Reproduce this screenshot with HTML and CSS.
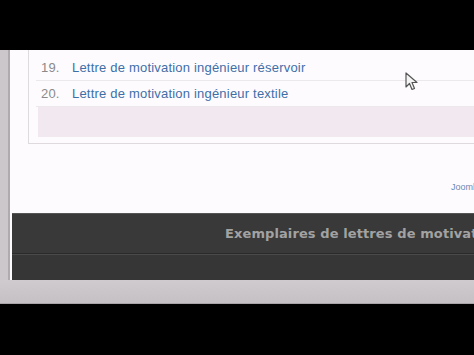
FILE: index.html
```html
<!DOCTYPE html>
<html lang="fr">
	<head>
		<meta charset="UTF-8" />
		<meta name="viewport" content="width=device-width, initial-scale=1.0" />
		<title>Lettres de motivation</title>
		<link rel="stylesheet" href="styles.css">
	</head>
	<body>
		<div class="screen">
			<div class="window">
				<div class="sidebar"></div>
				<div class="page">
					<div class="list-box">
						<ol class="letters" start="19">
							<li><span class="num">19.</span><a href="#">Lettre de motivation ingénieur réservoir</a></li>
							<li><span class="num">20.</span><a href="#">Lettre de motivation ingénieur textile</a></li>
						</ol>
						<div class="pager"></div>
					</div>
					<div class="credit"><a href="#">Joomla</a></div>
					<div class="footer">
						<div class="footer-title">Exemplaires de lettres de motivation</div>
						<div class="footer-bottom"></div>
					</div>
					<svg class="cursor" width="14" height="20" viewBox="0 0 14 20">
						<path d="M1 1 L1 15 L4.5 11.5 L7 17.5 L9.5 16.5 L7 10.5 L12 10.5 Z" fill="#f4f4f4" stroke="#555" stroke-width="1.2" stroke-linejoin="round" />
					</svg>
				</div>
			</div>
			<div class="statusbar"></div>
		</div>
	</body>
</html>
```

FILE: styles.css
```css
body {
	margin: 0;
	background: #000;
	height: 355px;
	overflow: hidden;
}
.screen {
	margin-top: 50px;
	height: 254px;
	display: flex;
	flex-direction: column;
}
.window {
	height: 230px;
	display: flex;
}
.sidebar {
	width: 8px;
	background: #cbc7cb;
	border-right: 2px solid #aeaaae;
}
.page {
	flex: 1;
	position: relative;
	background: #fdfbfd;
	overflow: hidden;
}
.list-box {
	margin-left: 18px;
	margin-right: -20px;
	border: 1px solid #dedade;
	border-top: none;
	padding: 5px 0 6px 7px;
}
.letters {
	list-style: none;
	margin: 0;
	padding: 0;
}
.letters li {
	height: 25px;
	display: flex;
	align-items: center;
	border-bottom: 1px solid #ece8ec;
	font-family: "Liberation Sans", Arial, sans-serif;
	font-size: 13px;
	letter-spacing: 0.2px;
}
.num {
	width: 36px;
	padding-left: 5px;
	box-sizing: border-box;
	color: #8a8a8a;
}
.letters a {
	color: #3f6fa8;
	text-decoration: none;
}
.pager {
	margin-left: 2px;
	height: 30px;
	background: #f1e9ef;
}
.credit {
	height: 69px;
	display: flex;
	justify-content: flex-end;
	align-items: center;
	font-family: "Liberation Sans", Arial, sans-serif;
	font-size: 9px;
	padding-top: 16px;
	box-sizing: border-box;
	margin-right: -6px;
}
.credit a {
	color: #6c88b6;
	text-decoration: none;
}
.footer {
	margin-left: 2px;
	height: 67px;
	background: #393939;
	border-top: 1px solid #555;
	box-sizing: border-box;
}
.footer-title {
	height: 39px;
	padding-left: 213px;
	display: flex;
	align-items: center;
	white-space: nowrap;
	font-family: "DejaVu Sans", Verdana, sans-serif;
	font-weight: bold;
	font-size: 13px;
	letter-spacing: 0.1px;
	color: #a2a2a2;
	border-bottom: 1px solid #2a2a2a;
	box-shadow: 0 1px 0 #4a4a4a;
}
.footer-bottom {
	height: 26px;
	background: #363636;
	margin-top: 1px;
}
.statusbar {
	height: 24px;
	background: linear-gradient(#cfcbcf, #c4c0c4);
	border-bottom: 1px solid #a8a4a8;
	box-sizing: border-box;
}
.cursor {
	position: absolute;
	left: 395px;
	top: 22px;
}
```
